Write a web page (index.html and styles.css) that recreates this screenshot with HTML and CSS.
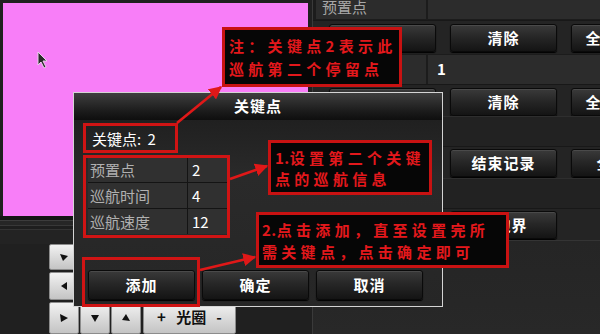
FILE: index.html
```html
<!DOCTYPE html>
<html lang="zh-CN">
<head>
<meta charset="utf-8">
<title>关键点</title>
<link rel="stylesheet" href="styles.css">
</head>
<body>
<div class="app">
  <div class="left">
    <div class="video">
      <svg class="cursor" width="12" height="18" viewBox="0 0 12 18"><path d="M1 1 L1 14 L4 11 L7 17 L9 16 L6 10 L10 10 Z" fill="#2a2a2a" stroke="#e8d0e8" stroke-width="1"/></svg>
    </div>
    <div class="rules"></div>
    <div class="ptz">
      <div class="ptz-row r1">
        <div class="pbtn"><svg width="10" height="10" viewBox="0 0 10 10"><polygon points="1,2 9,4 4,9" fill="#111"/></svg></div>
      </div>
      <div class="ptz-row r2">
        <div class="pbtn"><svg width="10" height="10" viewBox="0 0 10 10"><polygon points="8,1 8,9 2,5" fill="#111"/></svg></div>
      </div>
      <div class="ptz-row r3">
        <div class="pbtn"><svg width="10" height="10" viewBox="0 0 10 10"><polygon points="1,1 9,5 2,9" fill="#111"/></svg></div>
        <div class="pbtn"><svg width="10" height="10" viewBox="0 0 10 10"><polygon points="1,2 9,2 5,9" fill="#111"/></svg></div>
        <div class="pbtn"><svg width="10" height="10" viewBox="0 0 10 10"><polygon points="5,1 9,8 1,7" fill="#111"/></svg></div>
        <div class="pbtn wide"><span>+</span><span>光圈</span><span>-</span></div>
      </div>
    </div>
  </div>
  <div class="right">
    <div class="frow top"><div class="lab">预置点</div><div class="val"></div></div>
    <div class="brow b1"><div class="btn">设置</div><div class="btn">清除</div><div class="btn c1">全部清除</div></div>
    <div class="frow"><div class="lab">巡航线</div><div class="val">1</div></div>
    <div class="brow"><div class="btn">设置</div><div class="btn">清除</div><div class="btn c1">全部清除</div></div>
    <div class="erow"></div>
    <div class="brow b3"><div class="btn">开始记录</div><div class="btn">结束记录</div><div class="btn c2">全部清除</div></div>
    <div class="erow e2"></div>
    <div class="brow b3"><div class="btn">右边界</div><div class="btn">左边界</div></div>
    <div class="rest"></div>
  </div>
</div>

<div class="dialog">
  <div class="dtitle">关键点</div>
  <div class="dbody">
    <div class="klabel">关键点: 2</div>
    <div class="dtable">
      <div class="tl">预置点</div><div class="tv">2</div>
      <div class="tl">巡航时间</div><div class="tv">4</div>
      <div class="tl">巡航速度</div><div class="tv">12</div>
    </div>
    <svg class="chev" width="8" height="6" viewBox="0 0 8 6"><path d="M1 1 L4 4 L7 1" fill="none" stroke="#8a8a8a" stroke-width="1.4"/></svg>
    <div class="dactions">
      <div class="btn dbtn">添加</div>
      <div class="btn dbtn">确定</div>
      <div class="btn dbtn">取消</div>
    </div>
  </div>
</div>

<div class="hl hl-k"></div>
<div class="hl hl-t"></div>
<div class="hl hl-a"></div>

<div class="note note0">注：关键点2表示此<br>巡航第二个停留点</div>
<div class="note note1"><span class="num">1.</span>设置第二个关键<br>点的巡航信息</div>
<div class="note note2"><span class="num">2.</span>点击添加，直至设置完所<br>需关键点，点击确定即可</div>

<svg class="arrows" width="600" height="334" viewBox="0 0 600 334">
  <defs>
    <marker id="ah" viewBox="0 0 10 10" refX="9" refY="5" markerWidth="5" markerHeight="5" orient="auto" markerUnits="strokeWidth">
      <path d="M0 0 L10 5 L0 10 Z" fill="#e01818"/>
    </marker>
  </defs>
  <line x1="177" y1="123" x2="221" y2="87" stroke="#e01818" stroke-width="2.6" marker-end="url(#ah)"/>
  <line x1="230" y1="179" x2="267" y2="166" stroke="#e01818" stroke-width="2.6" marker-end="url(#ah)"/>
  <line x1="200" y1="270" x2="255" y2="257" stroke="#e01818" stroke-width="2.6" marker-end="url(#ah)"/>
</svg>
</body>
</html>
```

FILE: styles.css
```css
* { box-sizing: border-box; margin: 0; padding: 0; }
html, body { width: 600px; height: 334px; overflow: hidden; }
body {
  background: #222;
  font-family: "Noto Sans CJK SC", "Noto Sans", sans-serif;
  position: relative;
}

.app {
  display: grid;
  grid-template-columns: 313px 287px;
  height: 334px;
}

/* left column */
.left {
  background: #202020;
  padding: 3px 4px 0 3px;
  border-right: 1px solid #3a3a3a;
  display: flex;
  flex-direction: column;
  overflow: hidden;
}
.video {
  height: 216px;
  background: #f87ef8;
  position: relative;
}
.cursor { position: absolute; left: 34px; top: 48px; }
.rules {
  height: 28px;
  margin: 0 -4px 0 -3px;
  background: linear-gradient(#151515 0 4px, #3c3c3c 4px 5px, #262626 5px 9px, #383838 9px 10px, #1e1e1e 10px 13px, #333 13px 14px, #232323 14px);
}
.ptz {
  display: flex;
  flex-direction: column;
  gap: 2px;
  padding-left: 46px;
}
.ptz-row { display: flex; gap: 1px; }
.ptz-row.r1 { height: 26px; }
.ptz-row.r2 { height: 28px; }
.ptz-row.r3 { height: 32px; }
.pbtn {
  width: 30px;
  background: linear-gradient(#f2f2f2, #d6d6d6 60%, #c4c4c4);
  border: 1px solid #8c8c8c;
  border-radius: 2px;
  display: flex;
  align-items: center;
  justify-content: center;
}
.pbtn.wide {
  width: 93px;
  margin-left: 1px;
  justify-content: space-around;
  padding: 0 8px 4px;
  font-weight: bold;
  font-size: 15px;
  color: #111;
}

/* right column */
.right {
  background: #1c1c1c;
  overflow: hidden;
  display: flex;
  flex-direction: column;
}
.frow {
  display: flex;
  gap: 2px;
  padding-left: 3px;
  height: 29px;
  margin-top: 1px;
  font-size: 15px;
}
.frow.top { height: 19px; margin-top: 0; }
.frow .lab {
  width: 110px;
  flex: none;
  background: #2c2c2c;
  color: #a8a8a8;
  padding-left: 6px;
  line-height: 28px;
}
.frow.top .lab { line-height: 14px; }
.frow .val {
  flex: 1;
  background: #2c2c2c;
  color: #fff;
  font-weight: bold;
  padding-left: 9px;
  line-height: 28px;
}
.brow {
  height: 32px;
  display: flex;
  gap: 14px;
  padding: 3px 0 0 16px;
  background: #242424;
  border-top: 1px solid #181818;
}
.brow.b1 { height: 34px; margin-top: 1px; }
.brow.b3 { padding-top: 2px; }
.erow {
  height: 30px;
  background: #222;
  border-top: 1px solid #2e2e2e;
}
.erow.e2 { height: 30px; }
.rest {
  flex: 1;
  border-top: 1px solid #343434;
  background: linear-gradient(#252525, #282828);
}

.btn {
  flex: none;
  width: 107px;
  height: 28px;
  background: linear-gradient(#3a3a3a, #272727 45%, #141414);
  border: 1px solid #0a0a0a;
  border-radius: 3px;
  box-shadow: inset 0 1px 0 #4a4a4a, 0 1px 1px #000;
  color: #fff;
  font-weight: bold;
  font-size: 15px;
  letter-spacing: 1px;
  line-height: 26px;
  text-align: center;
  white-space: nowrap;
}
.btn.c1 { text-indent: -6px; letter-spacing: 3px; }
.btn.c2 { text-indent: 8px; }

/* dialog */
.dialog {
  position: absolute;
  left: 73px;
  top: 92px;
  width: 370px;
  height: 215px;
  border: 1px solid #d4d4d4;
  background: #242424;
  z-index: 2;
}
.dtitle {
  height: 27px;
  background: linear-gradient(#3e3e3e, #1a1a1a 70%, #0e0e0e);
  color: #fff;
  font-weight: bold;
  font-size: 15px;
  letter-spacing: 1px;
  text-align: center;
  line-height: 26px;
}
.dbody {
  position: relative;
  padding-top: 6px;
  height: 186px;
  background: linear-gradient(#202020, #2a2a2a 30%, #262626);
}
.klabel {
  height: 26px;
  line-height: 26px;
  padding-left: 18px;
  color: #fff;
  font-size: 15px;
  word-spacing: 3px;
}
.dtable {
  margin: 5px 0 0 14px;
  width: 140px;
  display: grid;
  grid-template-columns: 99px 40px;
  grid-auto-rows: 25px;
  gap: 1px;
  background: #141414;
  font-size: 15px;
}
.tl {
  background: #303030;
  color: #b0b0b0;
  padding-left: 2px;
  line-height: 25px;
}
.tv {
  background: #303030;
  color: #fff;
  padding-left: 4px;
  line-height: 25px;
}
.chev { position: absolute; left: 342px; top: 104px; }
.dactions {
  display: flex;
  gap: 7px;
  padding-left: 14px;
  margin-top: 36px;
}
.dbtn { height: 30px; line-height: 28px; }

/* annotation layer */
.hl {
  position: absolute;
  border: 3px solid #d01414;
  z-index: 3;
}
.hl-k { left: 83px; top: 123px; width: 95px; height: 30px; }
.hl-t { left: 83px; top: 155px; width: 147px; height: 83px; }
.hl-a { left: 82px; top: 257px; width: 118px; height: 50px; }

.note {
  position: absolute;
  z-index: 4;
  background: #060606;
  border: 3px solid #c81212;
  color: #e3181c;
  font-weight: bold;
  font-size: 15px;
  letter-spacing: 4.3px;
  white-space: nowrap;
}
.note .num { letter-spacing: 0.5px; }
.note0 { left: 222px; top: 27px; width: 180px; height: 60px; padding: 4px 0 0 4px; line-height: 23px; }
.note1 { left: 268px; top: 140px; width: 164px; height: 55px; padding: 4px 0 0 4px; line-height: 21px; }
.note2 { left: 256px; top: 212px; width: 253px; height: 56px; padding: 4px 0 0 3px; line-height: 22px; }

.arrows {
  position: absolute;
  left: 0;
  top: 0;
  z-index: 5;
  pointer-events: none;
}
```
